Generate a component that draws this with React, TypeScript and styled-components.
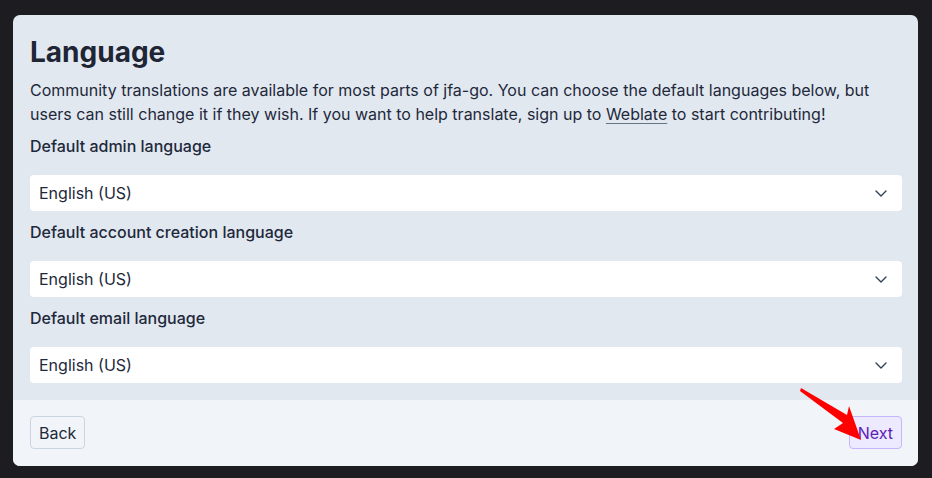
import React from 'react';
import styled, { createGlobalStyle } from 'styled-components';

const GlobalStyle = createGlobalStyle`
  html, body {
    margin: 0;
    padding: 0;
    background: #1c1c21;
    font-family: Inter, "Noto Sans", sans-serif;
  }
  * { box-sizing: border-box; }
`;

const languages = [
  'Default admin language',
  'Default account creation language',
  'Default email language',
];

const App = () => {
  return (
    <>
      <GlobalStyle />
      <Page>
        <Card>
          <Body>
            <Title>Language</Title>
            <Text>
              Community translations are available for most parts of jfa-go. You can choose the default languages below, but
              users can still change it if they wish. If you want to help translate, sign up to <Link href="#">Weblate</Link> to start contributing!
            </Text>
            {languages.map((label) => (
              <Field key={label}>
                <Label>{label}</Label>
                <Select>
                  <span>English (US)</span>
                  <Chevron viewBox="0 0 16 16">
                    <path d="M3 6l5 5 5-5" fill="none" stroke="#334155" strokeWidth="1.4" strokeLinecap="round" strokeLinejoin="round" />
                  </Chevron>
                </Select>
              </Field>
            ))}
          </Body>
          <Footer>
            <Button>Back</Button>
            <Button primary>Next</Button>
            <Arrow viewBox="0 0 70 60">
              <polygon points="1,1 47,28 49,19 61,53 34,42 43,36 0,4" fill="#ff0000" />
            </Arrow>
          </Footer>
        </Card>
      </Page>
    </>
  );
};

const Page = styled.div`
  padding: 15px 14px 12px 13px;
  height: 478px;
`;

const Card = styled.div`
  width: 905px;
  height: 451px;
  border-radius: 7px;
  overflow: hidden;
  display: flex;
  flex-direction: column;
  background: #e2e8f0;
`;

const Body = styled.div`
  padding: 19px 16px 17px 17px;
  flex: 1;
`;

const Title = styled.h1`
  margin: 0 0 8px;
  font-size: 28px;
  line-height: 36px;
  font-weight: 700;
  color: #1e2535;
`;

const Text = styled.p`
  margin: 0;
  font-size: 16px;
  line-height: 24px;
  color: #1e293b;
`;

const Link = styled.a`
  color: #1e293b;
  text-decoration: underline;
  text-decoration-color: #64748b;
  text-underline-offset: 3px;
`;

const Field = styled.div`
  margin-top: 9px;

  &:first-of-type {
    margin-top: 8px;
  }
`;

const Label = styled.div`
  font-size: 16px;
  line-height: 24px;
  font-weight: 500;
  color: #1e293b;
  margin-bottom: 17px;
`;

const Select = styled.div`
  height: 36px;
  background: #fff;
  border-radius: 4px;
  display: flex;
  align-items: center;
  justify-content: space-between;
  padding: 0 13px 0 9px;
  font-size: 16px;
  color: #1e293b;
`;

const Chevron = styled.svg`
  width: 16px;
  height: 16px;
`;

const Footer = styled.div`
  position: relative;
  background: #f1f5f9;
  height: 66px;
  padding: 16px 16px 17px 17px;
  display: flex;
  justify-content: space-between;
  align-items: flex-start;
`;

const Button = styled.button<{ primary?: boolean }>`
  height: 33px;
  padding: 0 8px;
  font-family: inherit;
  font-size: 16px;
  border-radius: 4px;
  border: 1px solid ${(p) => (p.primary ? '#c4b5fd' : '#cbd5e1')};
  background: ${(p) => (p.primary ? '#ede9fe' : '#f1f5f9')};
  color: ${(p) => (p.primary ? '#5b21b6' : '#1e293b')};
`;

const Arrow = styled.svg`
  position: absolute;
  left: 787px;
  top: -13px;
  width: 70px;
  height: 60px;
`;

export default App;
